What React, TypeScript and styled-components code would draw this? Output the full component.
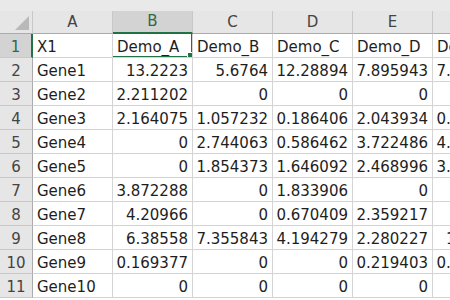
import * as React from 'react';
import styled, {createGlobalStyle} from 'styled-components';

const GlobalStyle = createGlobalStyle`
  html, body {
    margin: 0;
    padding: 0;
    background: #fff;
    overflow: hidden;
  }
  * { box-sizing: border-box; }
`

const Sheet = styled.div`
  width: 450px;
  height: 300px;
  overflow: hidden;
  background: #fff;
  font-family: "DejaVu Sans", "Liberation Sans", sans-serif;
  font-size: 15px;
  color: #1e1e1e;
`

const TopStrip = styled.div`
  height: 11px;
  width: 513px;
  background: #e9e9e9;
`

const Grid = styled.div`
  display: grid;
  grid-template-columns: 33px repeat(6, 80px);
  grid-template-rows: 23px;
  grid-auto-rows: 24px;
  width: 513px;
`

const Corner = styled.div`
  position: relative;
  background: #e6e6e6;
  border-right: 1px solid #c8c8c8;
  border-bottom: 1px solid #ababab;
  &::after {
    content: '';
    position: absolute;
    right: 3px;
    bottom: 3px;
    width: 0;
    height: 0;
    border-style: solid;
    border-width: 0 0 14px 14px;
    border-color: transparent transparent #b9b9b9 transparent;
  }
`

const ColHead = styled.div<{$active?: boolean}>`
  display: flex;
  align-items: flex-end;
  justify-content: center;
  padding-bottom: 2px;
  line-height: 18px;
  background: ${p => p.$active ? '#d3d3d3' : '#e6e6e6'};
  color: ${p => p.$active ? '#2f6b47' : '#444'};
  border-right: 1px solid #c8c8c8;
  border-bottom: ${p => p.$active ? '2px solid #217346' : '1px solid #ababab'};
`

const RowHead = styled.div<{$active?: boolean}>`
  display: flex;
  align-items: center;
  justify-content: center;
  padding-top: 3px;
  background: ${p => p.$active ? '#d3d3d3' : '#e6e6e6'};
  color: ${p => p.$active ? '#2f6b47' : '#444'};
  border-right: ${p => p.$active ? '2px solid #217346' : '1px solid #ababab'};
  border-bottom: 1px solid #c8c8c8;
`

const Cell = styled.div<{$num?: boolean}>`
  position: relative;
  display: flex;
  align-items: center;
  justify-content: ${p => p.$num ? 'flex-end' : 'flex-start'};
  padding: 3px 4px 0 4px;
  white-space: nowrap;
  overflow: ${p => p.$num ? 'visible' : 'hidden'};
  border-right: 1px solid #d4d4d4;
  border-bottom: 1px solid #d4d4d4;
`

const Selection = styled.div`
  position: absolute;
  top: -2px;
  left: -2px;
  right: -1px;
  bottom: -1px;
  border: 2px solid #217346;
  pointer-events: none;
  &::after {
    content: '';
    position: absolute;
    right: -5px;
    bottom: -5px;
    width: 7px;
    height: 7px;
    background: #217346;
    border: 1px solid #fff;
  }
`

const columns = ['A', 'B', 'C', 'D', 'E', 'F']

const header = ['X1', 'Demo_A', 'Demo_B', 'Demo_C', 'Demo_D', 'Demo_E']

const rows: [string, string[]][] = [
  ['Gene1', ['13.2223', '5.6764', '12.28894', '7.895943', '7.102385']],
  ['Gene2', ['2.211202', '0', '0', '0', '0']],
  ['Gene3', ['2.164075', '1.057232', '0.186406', '2.043934', '0.512364']],
  ['Gene4', ['0', '2.744063', '0.586462', '3.722486', '4.118752']],
  ['Gene5', ['0', '1.854373', '1.646092', '2.468996', '3.205811']],
  ['Gene6', ['3.872288', '0', '1.833906', '0', '0']],
  ['Gene7', ['4.20966', '0', '0.670409', '2.359217', '0']],
  ['Gene8', ['6.38558', '7.355843', '4.194279', '2.280227', '1.53872']],
  ['Gene9', ['0.169377', '0', '0', '0.219403', '0.284615']],
  ['Gene10', ['0', '0', '0', '0', '0']],
]

function App() {
  return (
    <Sheet>
      <GlobalStyle/>
      <TopStrip/>
      <Grid>
        <Corner/>
        {columns.map(c =>
          <ColHead key={c} $active={c === 'B'}>{c}</ColHead>
        )}

        <RowHead $active>1</RowHead>
        {header.map((h, i) =>
          <Cell key={h}>
            {h}
            {i === 1 && <Selection/>}
          </Cell>
        )}

        {rows.map(([name, values], r) =>
          <React.Fragment key={name}>
            <RowHead>{r + 2}</RowHead>
            <Cell>{name}</Cell>
            {values.map((v, i) => <Cell key={i} $num>{v}</Cell>)}
          </React.Fragment>
        )}
      </Grid>
    </Sheet>
  );
}

export default App
